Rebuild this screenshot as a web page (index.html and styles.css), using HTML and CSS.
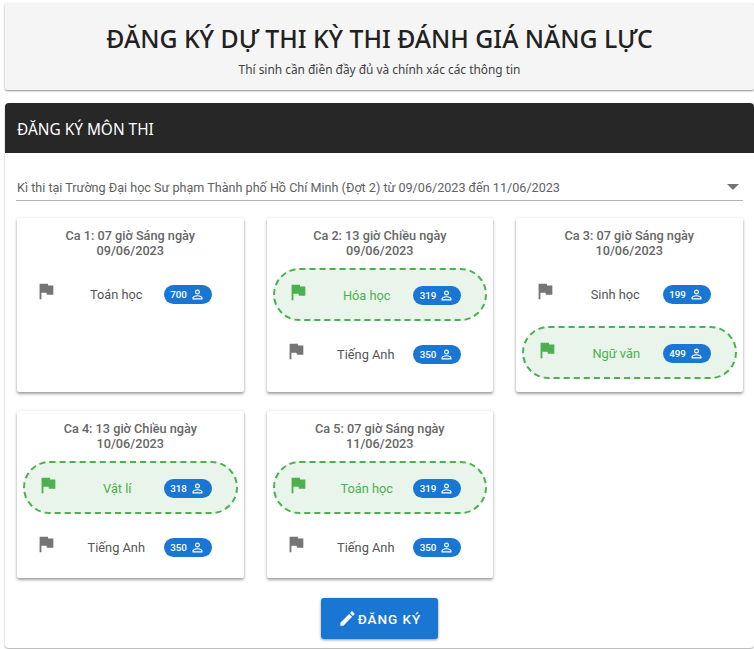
FILE: index.html
```html
<!DOCTYPE html>
<html lang="vi">
<head>
<meta charset="utf-8">
<title>Đăng ký dự thi</title>
<link rel="stylesheet" href="styles.css">
</head>
<body>
<svg class="defs" width="0" height="0" aria-hidden="true">
  <symbol id="flag" viewBox="0 0 24 24"><path d="M14.4 6 14 4H5v17h2v-7h5.6l.4 2h7V6z"/></symbol>
  <symbol id="user" viewBox="0 0 24 24"><path d="M12 5.9a2.1 2.1 0 1 1 0 4.2 2.1 2.1 0 0 1 0-4.2m0 9c2.97 0 6.1 1.46 6.1 2.1v1.1H5.9V17c0-.64 3.13-2.1 6.1-2.1M12 4C9.79 4 8 5.79 8 8s1.79 4 4 4 4-1.79 4-4-1.79-4-4-4zm0 9c-2.67 0-8 1.34-8 4v3h16v-3c0-2.66-5.33-4-8-4z"/></symbol>
  <symbol id="pencil" viewBox="0 0 24 24"><path d="M3 17.25V21h3.75L17.81 9.94l-3.75-3.75L3 17.25zM20.71 7.04a1 1 0 0 0 0-1.41l-2.34-2.34a1 1 0 0 0-1.41 0l-1.83 1.83 3.75 3.75 1.83-1.83z"/></symbol>
</svg>
<header class="hero">
  <h1 class="hero-title">ĐĂNG KÝ DỰ THI KỲ THI ĐÁNH GIÁ NĂNG LỰC</h1>
  <p class="hero-sub">Thí sinh cần điền đầy đủ và chính xác các thông tin</p>
</header>
<main class="panel">
  <h2 class="panel-head">ĐĂNG KÝ MÔN THI</h2>
  <div class="panel-body">
    <div class="select">
      <span>Kì thi tại Trường Đại học Sư phạm Thành phố Hồ Chí Minh (Đợt 2) từ 09/06/2023 đến 11/06/2023</span>
      <i class="caret"></i>
    </div>
    <div class="grid">
      <section class="card tall">
        <h3 class="card-title">Ca 1: 07 giờ Sáng ngày<br>09/06/2023</h3>
        <div class="row"><svg class="flag"><use href="#flag"/></svg><span class="name">Toán học</span><span class="chip">700<svg class="user"><use href="#user"/></svg></span></div>
      </section>
      <section class="card tall">
        <h3 class="card-title">Ca 2: 13 giờ Chiều ngày<br>09/06/2023</h3>
        <div class="row on"><svg class="flag"><use href="#flag"/></svg><span class="name">Hóa học</span><span class="chip">319<svg class="user"><use href="#user"/></svg></span></div>
        <div class="row"><svg class="flag"><use href="#flag"/></svg><span class="name">Tiếng Anh</span><span class="chip">350<svg class="user"><use href="#user"/></svg></span></div>
      </section>
      <section class="card tall">
        <h3 class="card-title">Ca 3: 07 giờ Sáng ngày<br>10/06/2023</h3>
        <div class="row"><svg class="flag"><use href="#flag"/></svg><span class="name">Sinh học</span><span class="chip">199<svg class="user"><use href="#user"/></svg></span></div>
        <div class="row on"><svg class="flag"><use href="#flag"/></svg><span class="name">Ngữ văn</span><span class="chip">499<svg class="user"><use href="#user"/></svg></span></div>
      </section>
      <section class="card">
        <h3 class="card-title">Ca 4: 13 giờ Chiều ngày<br>10/06/2023</h3>
        <div class="row on"><svg class="flag"><use href="#flag"/></svg><span class="name">Vật lí</span><span class="chip">318<svg class="user"><use href="#user"/></svg></span></div>
        <div class="row"><svg class="flag"><use href="#flag"/></svg><span class="name">Tiếng Anh</span><span class="chip">350<svg class="user"><use href="#user"/></svg></span></div>
      </section>
      <section class="card">
        <h3 class="card-title">Ca 5: 07 giờ Sáng ngày<br>11/06/2023</h3>
        <div class="row on"><svg class="flag"><use href="#flag"/></svg><span class="name">Toán học</span><span class="chip">319<svg class="user"><use href="#user"/></svg></span></div>
        <div class="row"><svg class="flag"><use href="#flag"/></svg><span class="name">Tiếng Anh</span><span class="chip">350<svg class="user"><use href="#user"/></svg></span></div>
      </section>
    </div>
    <div class="actions">
      <button class="btn" type="button"><svg class="pencil"><use href="#pencil"/></svg>ĐĂNG KÝ</button>
    </div>
  </div>
</main>
</body>
</html>
```
FILE: styles.css
```css
* { box-sizing: border-box; }
html, body { margin: 0; height: 649px; overflow: hidden; background: #fff; }
body { padding: 3px 0 0 5px; font-family: Roboto, sans-serif; color: #616161; }
.defs { position: absolute; }

.hero {
  height: 87px;
  padding-top: 17px;
  background: #f5f5f5;
  text-align: center;
  box-shadow: 0 1px 2px rgba(0,0,0,.45);
  border-radius: 2px;
}
.hero-title {
  margin: 0;
  font: 500 24.8px/36px "Noto Sans", sans-serif;
  color: #212121;
}
.hero-sub {
  margin: 5px 0 0;
  font: 400 11.9px/17px "Noto Sans", sans-serif;
  color: #424242;
}

.panel {
  margin-top: 13px;
  height: 545px;
  background: #fff;
  border-radius: 4px;
  box-shadow: 0 1px 2px rgba(0,0,0,.35);
}
.panel-head {
  margin: 0;
  height: 50px;
  padding: 0 12px;
  background: #272727;
  color: #fff;
  border-radius: 4px 4px 0 0;
  font: 400 15.4px/53px "Noto Sans", sans-serif;
}
.panel-body { padding: 0 11px; }

.select {
  display: flex;
  align-items: center;
  justify-content: space-between;
  height: 48px;
  padding: 21px 4px 0 1px;
  font-size: 12.6px;
  color: #616161;
  border-bottom: 1px solid #b5b5b5;
}
.caret {
  width: 0; height: 0;
  border: 6px solid transparent;
  border-top-color: #757575;
  border-bottom: 0;
}

.grid {
  display: grid;
  grid-template-columns: repeat(3, 226.5px);
  column-gap: 23px;
  row-gap: 19px;
  margin-top: 17px;
  padding-left: 1px;
}
.card {
  height: 167px;
  background: #fff;
  box-shadow: 0 2px 3px rgba(0,0,0,.35), 0 0 3px rgba(0,0,0,.1);
  border-radius: 2px;
  padding-top: 10px;
}
.tall { height: 174px; }
.card-title {
  margin: 0 0 10px;
  font-size: 12.7px;
  font-weight: 500;
  line-height: 15px;
  text-align: center;
  color: #666;
}
.row {
  display: flex;
  height: 53px;
  margin: 0 6px 5px;
  padding: 0 24px 0 9px;
  align-items: center;
  border: 2px dashed transparent;
  border-radius: 27px;
  font-size: 12.8px;
  color: #555;
}
.row.on {
  margin-bottom: 7px;
  padding-top: 1px;
  border-color: #4caf50;
  background: #e9f4ea;
  color: #4caf50;
}
.card-title + .row.on { margin-top: 2px; }
.flag {
  width: 22px; height: 22px;
  flex: none;
  fill: #757575;
  margin-top: -8px;
  margin-left: 1px;
}
.row.on .flag { fill: #4caf50; margin-left: 3px; margin-top: -7px; }
.name { flex: 1; text-align: center; padding-left: 12px; }
.chip {
  display: inline-flex;
  align-items: center;
  justify-content: center;
  gap: 3px;
  width: 48px;
  height: 19px;
  flex: none;
  border-radius: 10px;
  background: #1976d2;
  color: #fff;
  font-size: 9.8px;
  font-weight: 500;
}
.user { width: 15px; height: 15px; fill: #fff; }

.actions { display: flex; justify-content: center; margin-top: 20px; }
.btn {
  display: inline-flex;
  align-items: center;
  justify-content: center;
  width: 117px;
  height: 41px;
  border: 0;
  border-radius: 3px;
  background: #1976d2;
  color: #fff;
  font: 500 13.5px Roboto, sans-serif;
  letter-spacing: 1px;
  box-shadow: 0 1px 3px rgba(0,0,0,.4);
}
.pencil { width: 19px; height: 19px; fill: #fff; margin-right: 1px; }
```
